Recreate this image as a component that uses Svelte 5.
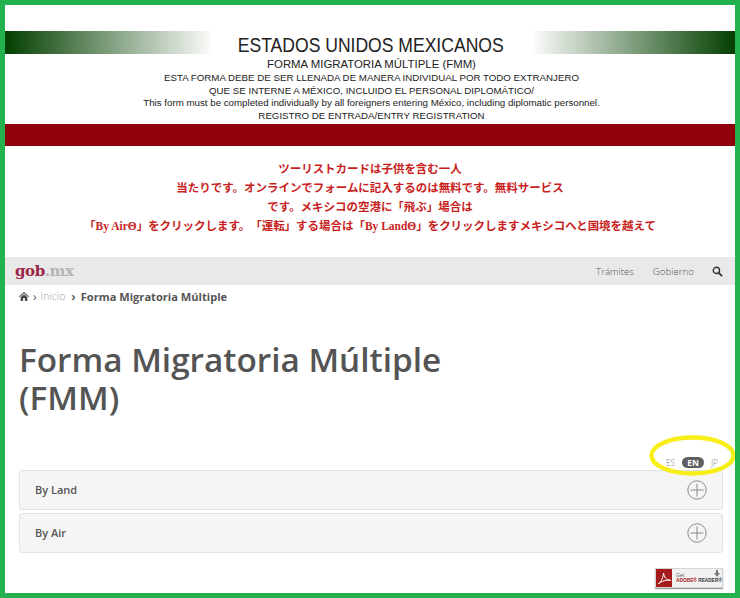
<script>
  const notes = [
    'ESTA FORMA DEBE DE SER LLENADA DE MANERA INDIVIDUAL POR TODO EXTRANJERO',
    'QUE SE INTERNE A MÉXICO, INCLUIDO EL PERSONAL DIPLOMÁTICO/',
    'This form must be completed individually by all foreigners entering México, including diplomatic personnel.',
    'REGISTRO DE ENTRADA/ENTRY REGISTRATION'
  ];
  const red = [
    'ツーリストカードは子供を含む一人',
    '当たりです。オンラインでフォームに記入するのは無料です。無料サービス',
    'です。メキシコの空港に「飛ぶ」場合は',
    '「By AirΘ」をクリックします。「運転」する場合は「By LandΘ」をクリックしますメキシコへと国境を越えて'
  ];
  const sections = ['By Land', 'By Air'];
</script>

<div class="frame">
  <header class="banner">
    <div class="title-row">
      <div class="fade left"></div>
      <h2>ESTADOS UNIDOS MEXICANOS</h2>
      <div class="fade right"></div>
    </div>
    <p class="form-name">FORMA MIGRATORIA MÚLTIPLE (FMM)</p>
    {#each notes as n}<p class="note">{n}</p>{/each}
    <div class="redband"></div>
  </header>

  <section class="notice">
    {#each red as r}<p>{r}</p>{/each}
  </section>

  <nav class="nav">
    <div class="logo"><b>gob</b><span>.mx</span></div>
    <div class="links">
      <span>Trámites</span>
      <span>Gobierno</span>
      <svg width="11" height="11" viewBox="0 0 12 12" fill="none" stroke="#333" aria-hidden="true">
        <circle cx="4.8" cy="4.8" r="3.4" stroke-width="1.5"/>
        <path d="M7.4 7.4L11 11" stroke-width="2"/>
      </svg>
    </div>
  </nav>

  <div class="crumbs">
    <svg width="10" height="9" viewBox="0 0 11 10" fill="#444" aria-hidden="true">
      <path d="M5.5 0L0 5l.6.7L5.5 1.4l4.9 4.3.6-.7zM1.8 5.9V10h2.6V7h2.2v3h2.6V5.9L5.5 2.6z"/>
    </svg>
    <span class="sep">›</span>
    <span class="inicio">Inicio</span>
    <span class="sep strong">›</span>
    <b>Forma Migratoria Múltiple</b>
  </div>

  <h1>Forma Migratoria Múltiple<br />(FMM)</h1>

  <div class="langs">
    <span>ES</span>
    <span class="active">EN</span>
    <span>JP</span>
  </div>

  <div class="accordion">
    {#each sections as s}
      <div class="row">
        <span>{s}</span>
        <svg width="20" height="20" viewBox="0 0 20 20" fill="none" stroke="#808080" stroke-width="0.9" aria-hidden="true">
          <circle cx="10" cy="10" r="9.2"/>
          <path d="M10 3.5v13M3.5 10h13"/>
        </svg>
      </div>
    {/each}
  </div>

  <div class="adobe-wrap">
    <div class="adobe">
      <div class="pdf">
        <svg width="15" height="15" viewBox="0 0 17 17" fill="none" stroke="#fff" stroke-width="1.1" aria-hidden="true">
          <path d="M1.5 14.5C4 13.5 6.5 9 7.5 2.5 8 7 10.5 10.5 15.5 10.5 11 10 5 11 1.5 14.5z"/>
        </svg>
      </div>
      <div class="txt"><small>Get</small><b><i>ADOBE®</i> READER®</b></div>
      <svg class="dl" width="6" height="7" viewBox="0 0 6 7" fill="#777" aria-hidden="true">
        <path d="M2 0h2v3h2L3 7 0 3h2z"/>
      </svg>
    </div>
  </div>

  <svg class="ring" width="92" height="46" viewBox="0 0 92 46" fill="none" aria-hidden="true">
    <ellipse cx="44.5" cy="21.5" rx="41" ry="18" stroke="#f7ee1a" stroke-width="4.5"/>
  </svg>
</div>

<style>
  :global(body) { margin: 0; background: #fff; }
  .frame {
    position: relative;
    width: 740px;
    height: 598px;
    box-sizing: border-box;
    border: 5px solid #22b14c;
    overflow: hidden;
    background: #fff;
    font-family: "Open Sans", "Noto Sans", sans-serif;
  }
  p, h1, h2 { margin: 0; }

  .banner { padding-top: 26px; text-align: center; font-family: "Liberation Sans", Arial, sans-serif; color: #222; }
  .title-row { display: flex; height: 23px; justify-content: space-between; align-items: center; }
  .fade { width: 208px; height: 23px; }
  .fade.left { background: linear-gradient(90deg, #033f00, #f5f7f4 97%, #fff); }
  .fade.right { width: 203px; background: linear-gradient(270deg, #033f00, #f5f7f4 97%, #fff); }
  h2 { font-weight: 400; font-size: 19.5px; line-height: 23px; color: #222; white-space: nowrap; margin: 5px 3px 0 0; transform: scaleX(0.9); }
  .form-name { font-size: 11.4px; line-height: 13px; margin-top: 4px; padding-left: 3px; }
  .note { font-size: 9.72px; line-height: 12.6px; padding-left: 3px; margin-top: 0; white-space: nowrap; }
  .form-name + .note { margin-top: 1px; }
  .redband { height: 22px; margin-top: 2px; background: #8e000b; }

  .notice {
    padding-top: 14px;
    height: 97px;
    box-sizing: border-box;
    text-align: center;
    color: #c81e1e;
    font-family: "Liberation Serif", "Noto Sans CJK JP", serif;
    font-weight: 700;
    font-size: 11.47px;
    line-height: 19px;
    white-space: nowrap;
    text-spacing-trim: space-all;
  }

  .nav {
    margin-top: 14px;
    height: 28px;
    background: #e9e9e9;
    display: flex;
    align-items: center;
    justify-content: space-between;
    padding: 0 12px 0 10px;
  }
  .logo { font-family: "DejaVu Serif", "Liberation Serif", serif; font-size: 15px; font-weight: 700; color: #9d2449; letter-spacing: -0.4px; }
  .logo span { color: #b5b5b5; }
  .links { display: flex; align-items: center; gap: 19px; font-size: 9.7px; font-weight: 300; color: #555; }
  .links svg { margin-left: -1px; }

  .crumbs {
    display: flex;
    align-items: center;
    gap: 4px;
    height: 22px;
    padding: 0 0 0 14px;
    font-size: 11.1px;
    color: #555;
  }
  .crumbs b { font-weight: 700; margin-left: 1px; }
  .inicio { color: #a0a0a0; font-weight: 300; font-size: 10.5px; }
  .sep { font-size: 12px; color: #666; }
  .sep.strong { font-weight: 700; margin-left: 2px; }

  h1 {
    margin: 33px 0 0 14px;
    font-weight: 600;
    font-size: 33.3px;
    line-height: 38px;
    color: #545454;
  }

  .langs {
    display: flex;
    justify-content: flex-end;
    align-items: center;
    gap: 7px;
    margin-top: 38px;
    padding-right: 17px;
    height: 16px;
    font-size: 8.5px;
    font-weight: 300;
    color: #888;
  }
  .active {
    background: #5f5f5f;
    color: #fff;
    font-weight: 700;
    border-radius: 6px;
    padding: 0 5px;
    line-height: 11px;
  }

  .accordion { margin: 0 12px 0 14px; display: flex; flex-direction: column; gap: 3px; }
  .row {
    height: 40px;
    box-sizing: border-box;
    background: #f5f5f5;
    border: 1px solid #e2e2e2;
    border-radius: 3px;
    display: flex;
    align-items: center;
    justify-content: space-between;
    padding: 0 15px 2px;
    font-size: 11px;
    font-weight: 600;
    color: #555;
  }
  .row svg { margin-top: 2px; }

  .adobe-wrap { display: flex; justify-content: flex-end; margin: 15px 12px 0 0; }
  .adobe {
    position: relative;
    width: 68px;
    height: 20px;
    box-sizing: border-box;
    display: flex;
    align-items: stretch;
    background: #f1f1f1;
    border: 1px solid #d5d5d5;
    box-shadow: 0 1px 1px #999;
  }
  .pdf { width: 17px; background: #a51a1a; display: flex; align-items: center; justify-content: center; }
  .txt { display: flex; flex-direction: column; justify-content: center; margin-left: 4px; font-family: "Liberation Sans", sans-serif; line-height: 6px; }
  .txt small { font-size: 5px; color: #555; }
  .txt b { font-size: 4.8px; color: #333; white-space: nowrap; }
  .txt i { font-style: normal; color: #a51a1a; }
  .dl { position: absolute; right: 2px; top: 1px; }

  .ring { position: absolute; left: 643px; top: 429px; }
</style>
